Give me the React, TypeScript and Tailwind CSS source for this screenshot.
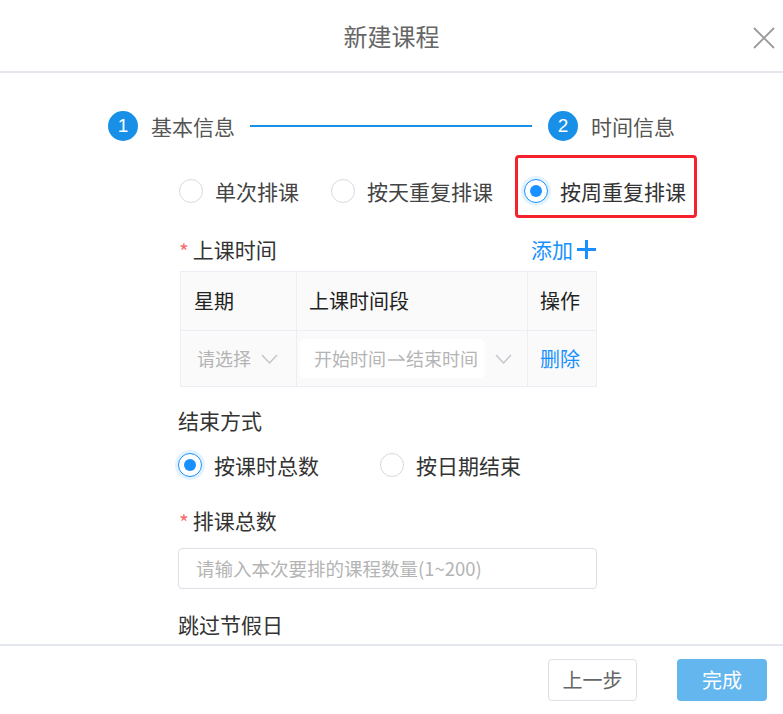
import React from "react";

const font = { fontFamily: '"Noto Sans CJK SC", "Noto Sans", sans-serif' };

function Radio({ checked }: { checked?: boolean }) {
  if (checked) {
    return (
      <span className="flex h-[24px] w-[24px] shrink-0 items-center justify-center rounded-full border border-[#1890ff] bg-white shadow-[0_0_0_3px_rgba(24,144,255,0.12)]">
        <span className="h-[12px] w-[12px] rounded-full bg-[#1890ff]" />
      </span>
    );
  }
  return <span className="h-[24px] w-[24px] shrink-0 rounded-full border border-[#d9d9d9] bg-white" />;
}

function Chevron() {
  return (
    <svg width="17" height="10" viewBox="0 0 17 10" fill="none">
      <path d="M1 1 L8.5 9 L16 1" stroke="#c0c4cc" strokeWidth="1.3" />
    </svg>
  );
}

export default function App() {
  return (
    <div className="relative h-[714px] w-[783px] overflow-hidden bg-white text-[#333]" style={font}>
      {/* header */}
      <div className="relative flex h-[73px] items-center justify-center border-b-2 border-[#e4e7ed]">
        <span className="text-[24px] text-[#666]">新建课程</span>
        <button className="absolute right-[6px] top-[25px] flex h-[26px] w-[26px] items-center justify-center">
          <svg width="24" height="24" viewBox="0 0 24 24" fill="none">
            <path d="M2 2 L22 22 M22 2 L2 22" stroke="#9a9a9a" strokeWidth="1.8" />
          </svg>
        </button>
      </div>

      {/* content */}
      <div className="h-[571px] overflow-hidden">
        {/* steps */}
        <div className="ml-[108px] mt-[38px] flex h-[30px] items-center">
          <span className="flex h-[30px] w-[30px] items-center justify-center rounded-full bg-[#1890e8] text-[19px] text-white" style={{ fontFamily: '"Liberation Sans", Arial, sans-serif' }}>1</span>
          <span className="ml-[13px] text-[21px] leading-[30px] text-[#555]">基本信息</span>
          <span className="ml-[15px] h-[2px] w-[282px] bg-[#1890e8]" />
          <span className="ml-[16px] flex h-[30px] w-[30px] items-center justify-center rounded-full bg-[#1890e8] text-[19px] text-white" style={{ fontFamily: '"Liberation Sans", Arial, sans-serif' }}>2</span>
          <span className="ml-[13px] text-[21px] leading-[30px] text-[#555]">时间信息</span>
        </div>

        {/* schedule type radios */}
        <div className="ml-[179px] mt-[35px] flex h-[30px] items-center">
          <label className="flex items-center gap-[12px]">
            <Radio />
            <span className="text-[21px] leading-[30px] text-[#444]">单次排课</span>
          </label>
          <label className="ml-[32px] flex items-center gap-[12px]">
            <Radio />
            <span className="text-[21px] leading-[30px] text-[#444]">按天重复排课</span>
          </label>
          <label className="relative ml-[31px] flex items-center gap-[12px]">
            <Radio checked />
            <span className="text-[21px] leading-[30px] text-[#333]">按周重复排课</span>
            <span className="pointer-events-none absolute -left-[9px] -right-[11px] -top-[21px] -bottom-[12px] rounded-[4px] border-[3px] border-[#f5222d]" />
          </label>
        </div>

        {/* form column */}
        <div className="ml-[178px] w-[419px]">
          <div className="mt-[28px] flex h-[30px] items-center justify-between">
            <div className="flex items-center">
              <span className="ml-[1px] mr-[4px] mt-[3px] text-[21px] leading-[30px] text-[#f56c6c]">*</span>
              <span className="text-[21px] leading-[30px] text-[#333]">上课时间</span>
            </div>
            <div className="flex items-center text-[#1890ff]">
              <span className="text-[21px] leading-[30px]">添加</span>
              <svg className="ml-[3px]" width="21" height="21" viewBox="0 0 21 21" fill="none">
                <path d="M10.5 1 V20 M1 10.5 H20" stroke="#1890ff" strokeWidth="3" />
              </svg>
            </div>
          </div>

          {/* table */}
          <div className="ml-[2px] mt-[7px] w-[417px] border border-[#ebeef5] bg-[#fafafa]">
            <div className="grid h-[59px] grid-cols-[116px_231px_1fr] border-b border-[#ebeef5]">
              <div className="flex items-center border-r border-[#ebeef5] pl-[13px] text-[20px] text-[#222]">星期</div>
              <div className="flex items-center border-r border-[#ebeef5] pl-[12px] text-[20px] text-[#222]">上课时间段</div>
              <div className="flex items-center pl-[12px] text-[20px] text-[#222]">操作</div>
            </div>
            <div className="grid h-[55px] grid-cols-[116px_231px_1fr]">
              <div className="flex items-center border-r border-[#ebeef5] pl-[16px] text-[18px] text-[#b4b4b4]">
                <span>请选择</span>
                <span className="ml-[10px]"><Chevron /></span>
              </div>
              <div className="flex items-center border-r border-[#ebeef5] pl-[2px]">
                <div className="flex h-[39px] w-[186px] items-center rounded-[6px] bg-white pl-[15px] text-[18px] text-[#b4b4b4]">
                  <span>开始时间</span>
                  <svg className="mx-[1px]" width="18" height="12" viewBox="0 0 18 12" fill="none">
                    <path d="M1 7 H17 L12 2" stroke="#b4b4b4" strokeWidth="1.5" />
                  </svg>
                  <span className="whitespace-nowrap">结束时间</span>
                </div>
                <span className="ml-[10px]"><Chevron /></span>
              </div>
              <div className="flex items-center pl-[12px] text-[20px] text-[#1890ff]">删除</div>
            </div>
          </div>

          <div className="mt-[18px] text-[21px] leading-[30px] text-[#333]">结束方式</div>

          <div className="mt-[15px] flex h-[30px] items-center">
            <label className="flex items-center gap-[12px]">
              <Radio checked />
              <span className="text-[21px] leading-[30px] text-[#333]">按课时总数</span>
            </label>
            <label className="ml-[61px] flex items-center gap-[12px]">
              <Radio />
              <span className="text-[21px] leading-[30px] text-[#333]">按日期结束</span>
            </label>
          </div>

          <div className="mt-[25px] flex h-[30px] items-center">
            <span className="ml-[1px] mr-[4px] mt-[3px] text-[21px] leading-[30px] text-[#f56c6c]">*</span>
            <span className="text-[21px] leading-[30px] text-[#333]">排课总数</span>
          </div>

          <div className="mt-[13px] flex h-[41px] w-[419px] items-center rounded-[4px] border border-[#dcdfe6] bg-white pl-[17px] text-[18.5px] text-[#b4b4b4]">
            请输入本次要排的课程数量(1~200)
          </div>

          <div className="mt-[20px] text-[21px] leading-[30px] text-[#333]">跳过节假日</div>
        </div>
      </div>

      {/* footer */}
      <div className="flex h-[70px] items-center justify-end gap-[40px] border-t-2 border-[#e4e7ed] pr-[16px]">
        <button className="flex h-[42px] w-[89px] items-center justify-center rounded-[4px] border border-[#dcdfe6] bg-white text-[20px] text-[#666]">上一步</button>
        <button className="flex h-[42px] w-[90px] items-center justify-center rounded-[4px] bg-[#64b6ee] text-[20px] text-white">完成</button>
      </div>
    </div>
  );
}
